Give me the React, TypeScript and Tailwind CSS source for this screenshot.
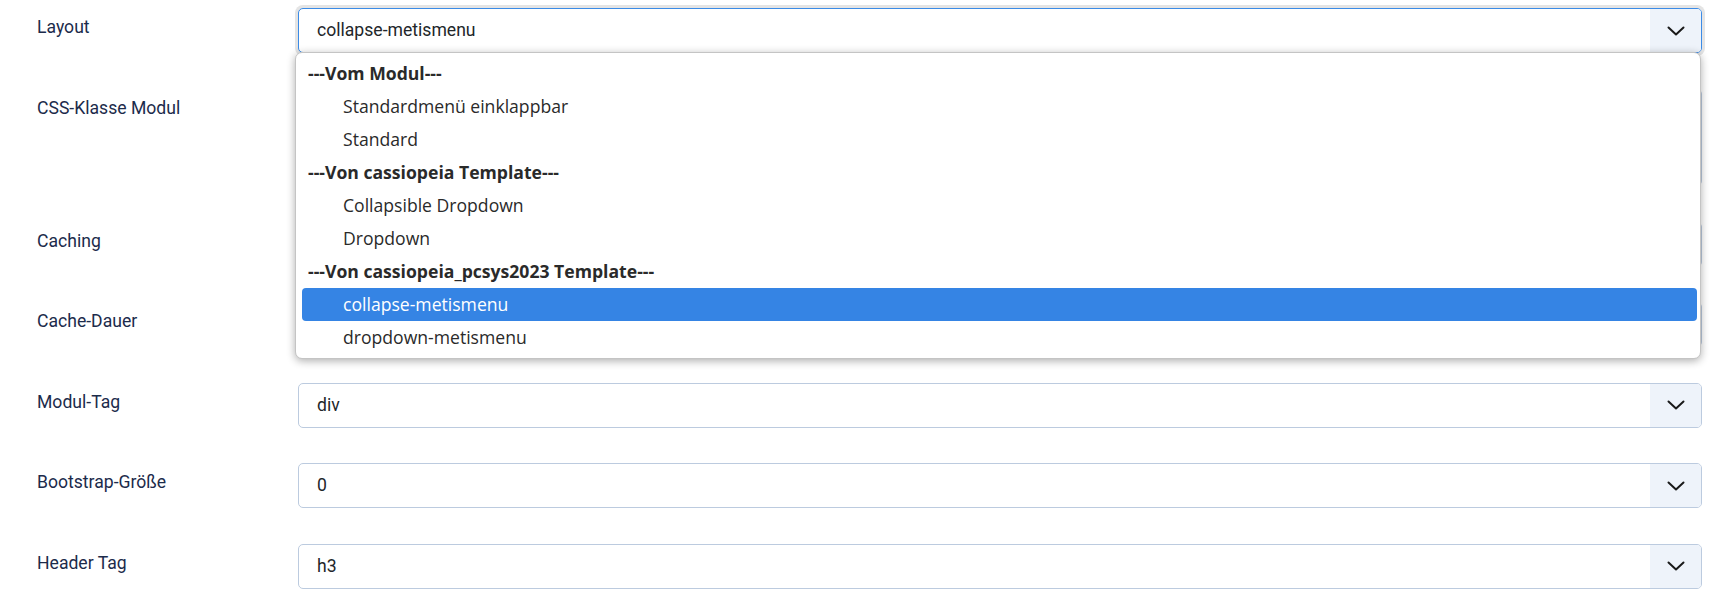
import React from "react";

type Field = { label: string; value?: string; kind: "select" | "textarea" };

// Caching and Cache-Dauer sit under the open list, so their values stay blank.
const fields: Field[] = [
  { label: "Layout", value: "collapse-metismenu", kind: "select" },
  { label: "CSS-Klasse Modul", kind: "textarea" },
  { label: "Caching", value: "", kind: "select" },
  { label: "Cache-Dauer", value: "", kind: "select" },
  { label: "Modul-Tag", value: "div", kind: "select" },
  { label: "Bootstrap-Größe", value: "0", kind: "select" },
  { label: "Header Tag", value: "h3", kind: "select" },
];

type Opt = { text: string; group?: boolean; selected?: boolean };

const options: Opt[] = [
  { text: "---Vom Modul---", group: true },
  { text: "Standardmenü einklappbar" },
  { text: "Standard" },
  { text: "---Von cassiopeia Template---", group: true },
  { text: "Collapsible Dropdown" },
  { text: "Dropdown" },
  { text: "---Von cassiopeia_pcsys2023 Template---", group: true },
  { text: "collapse-metismenu", selected: true },
  { text: "dropdown-metismenu" },
];

function Chevron() {
  return (
    <svg width="18" height="10" viewBox="0 0 18 10" fill="none">
      <path d="M1.5 1.5 L9 8.5 L16.5 1.5" stroke="#1a1a1a" strokeWidth="2" strokeLinecap="round" strokeLinejoin="round" />
    </svg>
  );
}

function SelectBox({ value, focused }: { value: string; focused?: boolean }) {
  return (
    <div
      className={
        "flex h-[45px] w-full items-stretch overflow-hidden rounded-[5px] border bg-white " +
        (focused
          ? "border-[#3b8be6] shadow-[0_0_0_3px_#e4e4e4]"
          : "border-[#bccbdf]")
      }
    >
      <div className="flex flex-1 items-center pl-[18px] text-[17.6px] text-[#22262a]">{value}</div>
      <div className="flex w-[51px] items-center justify-center bg-[#eef3fa]">
        <Chevron />
      </div>
    </div>
  );
}

function Popup() {
  return (
    <div className="absolute left-[-3px] right-[1px] top-[44px] z-10 rounded-[7px] border border-[#c4c4c4] bg-white py-[4px] pl-[6px] pr-[3px] shadow-[0_2px_9px_rgba(0,0,0,0.32)] font-['Open_Sans',sans-serif] text-[17.6px] text-[#2a2a2a]">
      {options.map((o) => (
        <div
          key={o.text}
          className={
            "flex h-[33px] items-center rounded-[4px] " +
            (o.group ? "pl-[6px] font-bold " : "pl-[41px] ") +
            (o.selected ? "bg-[#3584e4] text-white" : "")
          }
        >
          {o.text}
        </div>
      ))}
    </div>
  );
}

export default function App() {
  return (
    <div className="min-h-[606px] w-full bg-white pl-[37px] pr-[24px] pt-[8px] font-['Roboto',sans-serif]">
      <div className="flex flex-col gap-[35.5px]">
        {fields.map((f, i) => (
          <div key={f.label} className="flex">
            <div className="w-[261px] shrink-0 pt-[6px] text-[17.6px] leading-[26px] text-[#1c2b4b]">{f.label}</div>
            <div className="relative flex-1">
              {f.kind === "select" ? (
                <SelectBox value={f.value ?? ""} focused={i === 0} />
              ) : (
                <div className="h-[97.5px] w-full rounded-[5px] border border-[#bccbdf] bg-white" />
              )}
              {i === 0 && <Popup />}
            </div>
          </div>
        ))}
      </div>
    </div>
  );
}
